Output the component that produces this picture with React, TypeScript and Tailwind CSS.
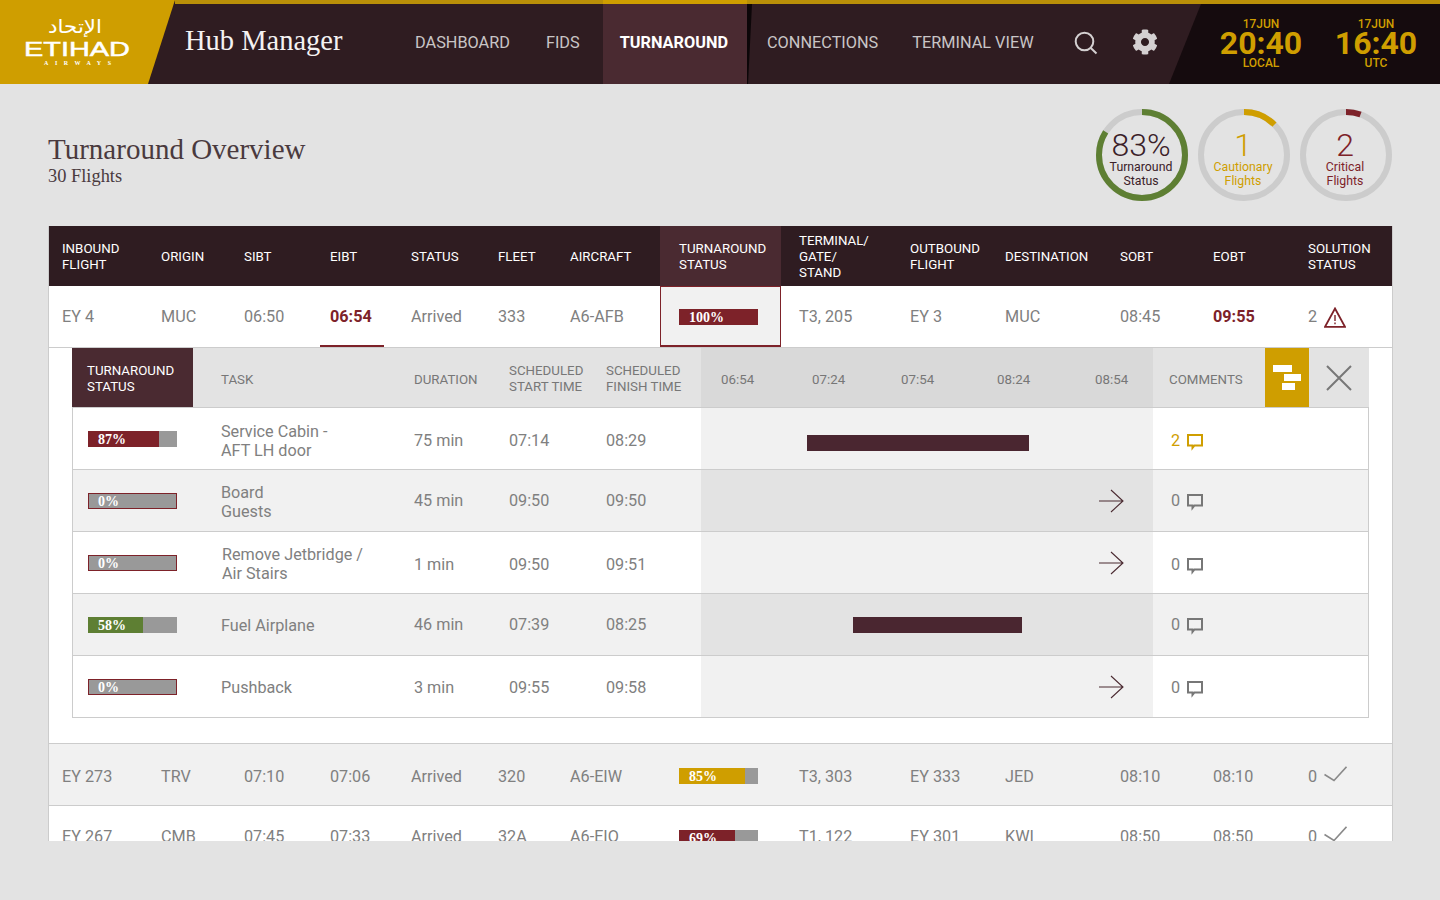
import React from 'react';
import { FaCog } from 'react-icons/fa';

const mainCols = [
    'w-[112px] pl-[13px]',
    'w-[83px]',
    'w-[86px]',
    'w-[81px]',
    'w-[87px]',
    'w-[72px]',
    'w-[90px]',
    'w-[121px] pl-[19px]',
    'w-[111px] ml-[18px]',
    'w-[95px]',
    'w-[115px]',
    'w-[93px]',
    'w-[95px]',
    'w-[84px]',
];

const RED = '#7d2229';
const GOLD = '#cf9e00';
const GREEN = '#5e7f33';

const Ring = ({ pct, color, big, label, textColor }: { pct: number; color: string; big: string; label: string[]; textColor: string }) => (
    <div className="relative w-[92px] h-[92px]">
        <svg width="92" height="92" viewBox="0 0 92 92" className="absolute inset-0">
            <circle cx="46" cy="46" r="43" fill="none" stroke="#cccccc" strokeWidth="6" />
            <circle
                cx="46"
                cy="46"
                r="43"
                fill="none"
                stroke={color}
                strokeWidth="6"
                pathLength={100}
                strokeDasharray={`${pct} 100`}
                transform="rotate(-90 46 46)"
            />
        </svg>
        <div className="relative flex flex-col items-center pt-[20px] pr-[2px]" style={{ color: textColor }}>
            <div className="text-[32px] leading-[32px] font-light">{big}</div>
            <div className="text-[12.3px] leading-[14px] text-center mt-[-1px]">
                {label[0]}
                <br />
                {label[1]}
            </div>
        </div>
    </div>
);

const Bar = ({ pct, fill, color, w, outlined }: { pct: number; fill: number; color: string; w: string; outlined?: boolean }) => (
    <div className={`relative h-4 bg-[#999999] ${w} ${outlined ? 'border border-[#7d2229]' : ''}`}>
        <div className="h-full" style={{ width: `${fill}%`, backgroundColor: color }} />
        <span className={`absolute leading-[16px] text-[14px] font-bold text-white [font-family:'Liberation_Serif',serif] ${outlined ? 'left-[9px] top-0' : 'left-[10px] top-px'}`}>
            {pct}%
        </span>
    </div>
);

const CommentIcon = ({ color }: { color: string }) => (
    <svg className="mt-[4px]" width="16" height="17" viewBox="0 0 16 17" fill="none">
        <path d="M1 1H15V11.5H7.5L5.5 14V11.5H1V1Z" stroke={color} strokeWidth="2" />
    </svg>
);

const Arrow = () => (
    <svg width="26" height="24" viewBox="0 0 26 24" fill="none" stroke="#4a2a31" strokeWidth="1.1">
        <path d="M1 12H25M13 1L25 12L13 23" />
    </svg>
);

const Warning = () => (
    <svg width="22" height="21" viewBox="0 0 22 21" fill="none" stroke="#7d2229" strokeWidth="1.8">
        <path d="M11 1.5L21 19.8H1L11 1.5Z" />
        <path d="M11 8V14M11 15.5V17.2" strokeWidth="1.4" />
    </svg>
);

const Check = () => (
    <svg className="mb-[6px]" width="23" height="16" viewBox="0 0 23 16" fill="none" stroke="#8a8a8a" strokeWidth="1.6">
        <path d="M0.5 8.5L10 14.5L22.5 0.8" />
    </svg>
);

const FlightRow = ({ cells, bg, bar, pad }: { cells: string[]; bg: string; bar: React.ReactNode; pad: string }) => (
    <div className={`flex items-center h-[62px] border-b border-[#cccccc] text-[16.2px] text-[#808080] ${bg} ${pad}`}>
        {cells.slice(0, 13).map((c, i) => (
            <div key={i} className={mainCols[i]}>
                {i === 7 ? bar : c}
            </div>
        ))}
        <div className={`${mainCols[13]} flex items-center gap-[7px]`}>
            0 <Check />
        </div>
    </div>
);

const tasks = [
    { pct: 87, fill: 80, color: RED, name: ['Service Cabin -', 'AFT LH door'], nameCls: 'mt-[4px]', dur: '75 min', start: '07:14', end: '08:29', gantt: 'ml-[106px] w-[222px] mt-[8px]', comments: 2, shift: 'mt-[4px]' },
    { pct: 0, fill: 0, color: RED, name: ['Board', 'Guests'], nameCls: 'mt-[2px]', dur: '45 min', start: '09:50', end: '09:50', comments: 0, shift: '' },
    { pct: 0, fill: 0, color: RED, name: ['Remove Jetbridge /', 'Air Stairs'], nameCls: 'mt-[3px] pl-px', dur: '1 min', start: '09:50', end: '09:51', comments: 0, shift: 'mt-[4px]' },
    { pct: 58, fill: 62, color: GREEN, name: ['Fuel Airplane'], nameCls: 'mt-[2px]', dur: '46 min', start: '07:39', end: '08:25', gantt: 'ml-[152px] w-[169px]', comments: 0, shift: '' },
    { pct: 0, fill: 0, color: RED, name: ['Pushback'], nameCls: 'mt-[2px]', dur: '3 min', start: '09:55', end: '09:58', comments: 0, shift: 'mt-[2px]' },
];

const TaskRow = ({ t, grey }: { t: (typeof tasks)[number]; grey: boolean }) => (
    <div className={`flex items-center h-[62px] border-b border-[#cccccc] text-[16.2px] leading-[19px] text-[#808080] ${grey ? 'bg-[#f1f1f1]' : 'bg-white'}`}>
        <div className="w-[148px] pl-[15px]">
            <Bar pct={t.pct} fill={t.fill} color={t.color} w="w-[89px]" outlined={t.pct === 0} />
        </div>
        <div className={`w-[193px] ${t.nameCls}`}>
            {t.name.map((n) => (
                <div key={n}>{n}</div>
            ))}
        </div>
        <div className={`w-[95px] ${t.shift}`}>{t.dur}</div>
        <div className={`w-[97px] ${t.shift}`}>{t.start}</div>
        <div className={`w-[95px] ${t.shift}`}>{t.end}</div>
        <div className={`flex items-center h-full w-[452px] ${grey ? 'bg-[#e3e3e3]' : 'bg-[#f1f1f1]'}`}>
            {t.gantt ? (
                <div className={`h-4 bg-[#4a2630] ${t.gantt}`} />
            ) : (
                <div className="ml-auto mr-[29px] flex">
                    <Arrow />
                </div>
            )}
        </div>
        <div className={`flex items-center gap-[7px] pl-[18px] ${t.shift} ${t.comments ? 'text-[#cf9e00]' : ''}`}>
            {t.comments}
            <CommentIcon color={t.comments ? GOLD : '#777777'} />
        </div>
    </div>
);

const Clock = ({ time, label, cls }: { time: string; label: string; cls: string }) => (
    <div className={`pt-[14px] ${cls}`}>
        <div className="text-[12px] leading-[12px] font-medium">17JUN</div>
        <div className="text-[32px] leading-[27px] font-bold">{time}</div>
        <div className="text-[12px] leading-[12px] font-medium">{label}</div>
    </div>
);

export default function App() {
    return (
        <div className="h-[900px] overflow-hidden bg-[#e3e3e3] [font-family:Roboto,sans-serif]">
            <header className="flex h-[84px] bg-[#2f1c21]">
                <div className="w-[175px] h-full bg-[#cf9e00] [clip-path:polygon(0_0,100%_0,148px_100%,0_100%)]">
                    <svg width="150" height="84" viewBox="0 0 150 84" fill="white">
                        <text x="48" y="33" fontSize="19" textLength="54" lengthAdjust="spacingAndGlyphs" fontFamily="'DejaVu Sans',sans-serif">الإتحاد</text>
                        <text x="24" y="55.5" fontSize="21" stroke="white" strokeWidth="0.5" textLength="106" lengthAdjust="spacingAndGlyphs" fontFamily="'Liberation Sans',sans-serif">ETIHAD</text>
                        <text x="44" y="64.5" fontSize="6" fontWeight="700" textLength="67" fontFamily="'Liberation Serif',serif">AIRWAYS</text>
                    </svg>
                </div>
                <div className="flex flex-1 border-t-4 border-[#b98f08]">
                    <div className="w-[230px] pl-[10px] leading-[74px] text-[28.5px] text-[#f4f2f2] [font-family:'Liberation_Serif',serif]">Hub Manager</div>
                    <nav className="flex items-center text-[16.3px] text-[#c9c5c6]">
                        <a className="ml-[10px] pb-[2px]">DASHBOARD</a>
                        <a className="ml-[36px] pb-[2px]">FIDS</a>
                        <a className="flex items-center h-[84px] mt-[-4px] ml-[23px] pl-[17px] pr-[19px] pb-[2px] border-t-4 border-[#cf9e00] bg-[#4a2a31] font-bold text-white">TURNAROUND</a>
                        <svg width="5" height="80" viewBox="0 0 5 80" className="self-stretch">
                            <path d="M0 0H5L1 80H0Z" fill="#0c0608" />
                        </svg>
                        <a className="ml-[15px] pb-[2px]">CONNECTIONS</a>
                        <a className="ml-[34px] pb-[2px]">TERMINAL VIEW</a>
                        <svg className="ml-[40px] mb-[2px]" width="24" height="24" viewBox="0 0 24 24" fill="none" stroke="#d4d0d1" strokeWidth="2">
                            <circle cx="10.5" cy="10.5" r="8.8" />
                            <path d="M16.8 17L22.5 22.5" />
                        </svg>
                        <FaCog className="ml-[34px] mb-[4px] text-[#d4d0d1]" size={26} />
                    </nav>
                    <div className="ml-auto w-[271px] flex bg-[#150b0e] text-[#cf9e00] text-center [clip-path:polygon(32px_0,100%_0,100%_100%,0_100%)]">
                        <Clock time="20:40" label="LOCAL" cls="w-[154px] pl-[30px]" />
                        <Clock time="16:40" label="UTC" cls="w-[117px] pr-[11px]" />
                    </div>
                </div>
            </header>

            <main className="pl-[48px]">
                <div className="flex h-[142px] w-[1344px]">
                    <div className="pt-[47px] text-[#4a3a3e] [font-family:'Liberation_Serif',serif]">
                        <h1 className="text-[29px] leading-[36px]">Turnaround Overview</h1>
                        <p className="text-[18.4px] leading-[20px] mt-[-1px]">30 Flights</p>
                    </div>
                    <div className="ml-auto flex gap-[10px] pt-[25px]">
                        <Ring pct={84} color={GREEN} big="83%" label={['Turnaround', 'Status']} textColor="#3a2028" />
                        <Ring pct={12.5} color={GOLD} big="1" label={['Cautionary', 'Flights']} textColor={GOLD} />
                        <Ring pct={5.5} color={RED} big="2" label={['Critical', 'Flights']} textColor={RED} />
                    </div>
                </div>

                <div className="w-[1345px] h-[615px] overflow-hidden border-x border-[#cccccc] bg-white">
                    <div className="flex items-center h-[60px] bg-[#2f1c21] text-[13.3px] leading-[16px] text-white">
                        {[
                            ['INBOUND', 'FLIGHT'],
                            ['ORIGIN'],
                            ['SIBT'],
                            ['EIBT'],
                            ['STATUS'],
                            ['FLEET'],
                            ['AIRCRAFT'],
                            ['TURNAROUND', 'STATUS'],
                            ['TERMINAL/', 'GATE/', 'STAND'],
                            ['OUTBOUND', 'FLIGHT'],
                            ['DESTINATION'],
                            ['SOBT'],
                            ['EOBT'],
                            ['SOLUTION', 'STATUS'],
                        ].map((h, i) => (
                            <div key={i} className={`${mainCols[i]} ${i === 7 ? 'flex flex-col justify-center h-full pt-[2px] bg-[#4a2a31]' : 'mt-[2px]'}`}>
                                {h.map((l) => (
                                    <div key={l}>{l}</div>
                                ))}
                            </div>
                        ))}
                    </div>

                    <div className="flex items-center h-[62px] pt-[2px] border-b border-[#cccccc] text-[16.2px] text-[#808080]">
                        <div className={mainCols[0]}>EY 4</div>
                        <div className={mainCols[1]}>MUC</div>
                        <div className={mainCols[2]}>06:50</div>
                        <div className={`${mainCols[3]} relative self-stretch flex items-center font-bold text-[#7d2229]`}>
                            06:54
                            <div className="absolute left-[-10px] bottom-0 w-[64px] h-[2px] bg-[#7d2229]" />
                        </div>
                        <div className={mainCols[4]}>Arrived</div>
                        <div className={mainCols[5]}>333</div>
                        <div className={mainCols[6]}>A6-AFB</div>
                        <div className="flex items-center w-[121px] h-[61px] self-start mt-[-2px] pl-[18px] pt-[1px] bg-[#f1f1f1] border-x border-t border-b-2 border-[#7d2229]">
                            <Bar pct={100} fill={100} color={RED} w="w-[79px]" />
                        </div>
                        <div className={mainCols[8]}>T3, 205</div>
                        <div className={mainCols[9]}>EY 3</div>
                        <div className={mainCols[10]}>MUC</div>
                        <div className={mainCols[11]}>08:45</div>
                        <div className={`${mainCols[12]} font-bold text-[#7d2229]`}>09:55</div>
                        <div className={`${mainCols[13]} flex items-center gap-[7px]`}>
                            2 <Warning />
                        </div>
                    </div>

                    <div className="pl-[23px] pr-[23px] pb-[25px] border-b border-[#cccccc]">
                        <div className="flex items-center h-[60px] border-b border-[#cccccc] bg-[#e3e3e3] text-[13.3px] leading-[16px] text-[#777777]">
                            <div className="flex flex-col justify-center w-[121px] h-full pl-[15px] pt-[2px] bg-[#4a2a31] text-white">
                                <div>TURNAROUND</div>
                                <div>STATUS</div>
                            </div>
                            <div className="w-[221px] pl-[28px] mt-[4px]">TASK</div>
                            <div className="w-[95px] mt-[4px]">DURATION</div>
                            <div className="w-[97px] mt-[2px]">
                                SCHEDULED
                                <br />
                                START TIME
                            </div>
                            <div className="w-[95px] mt-[2px]">
                                SCHEDULED
                                <br />
                                FINISH TIME
                            </div>
                            <div className="flex items-center w-[452px] h-full pl-[20px] pt-[4px] bg-[#d9d9d9]">
                                <div className="w-[91px]">06:54</div>
                                <div className="w-[89px]">07:24</div>
                                <div className="w-[96px]">07:54</div>
                                <div className="w-[98px]">08:24</div>
                                <div>08:54</div>
                            </div>
                            <div className="w-[112px] pl-[16px] mt-[4px]">COMMENTS</div>
                            <div className="flex items-center justify-center w-[44px] h-full bg-[#cf9e00]">
                                <svg width="28" height="25" viewBox="0 0 28 25" fill="white">
                                    <rect x="0" y="0" width="19" height="7" />
                                    <rect x="11" y="9" width="17" height="7" />
                                    <rect x="9" y="18" width="13" height="7" />
                                </svg>
                            </div>
                            <div className="flex items-center justify-center flex-1 h-full">
                                <svg width="26" height="26" viewBox="0 0 26 26" fill="none" stroke="#777777" strokeWidth="2">
                                    <path d="M1 1L25 25M25 1L1 25" />
                                </svg>
                            </div>
                        </div>
                        <div className="border-x border-[#cccccc]">
                            {tasks.map((t, i) => (
                                <TaskRow key={i} t={t} grey={i === 1 || i === 3} />
                            ))}
                        </div>
                    </div>

                    <FlightRow
                        bg="bg-[#f1f1f1]"
                        pad="pt-[6px]"
                        bar={
                            <div className="mb-[4px]">
                                <Bar pct={85} fill={84} color={GOLD} w="w-[79px]" />
                            </div>
                        }
                        cells={['EY 273', 'TRV', '07:10', '07:06', 'Arrived', '320', 'A6-EIW', '', 'T3, 303', 'EY 333', 'JED', '08:10', '08:10', '']}
                    />
                    <FlightRow
                        bg="bg-white"
                        pad="pt-[2px]"
                        bar={<Bar pct={69} fill={71} color={RED} w="w-[79px]" />}
                        cells={['EY 267', 'CMB', '07:45', '07:33', 'Arrived', '32A', 'A6-EIO', '', 'T1, 122', 'EY 301', 'KWI', '08:50', '08:50', '']}
                    />
                </div>
            </main>
        </div>
    );
}
